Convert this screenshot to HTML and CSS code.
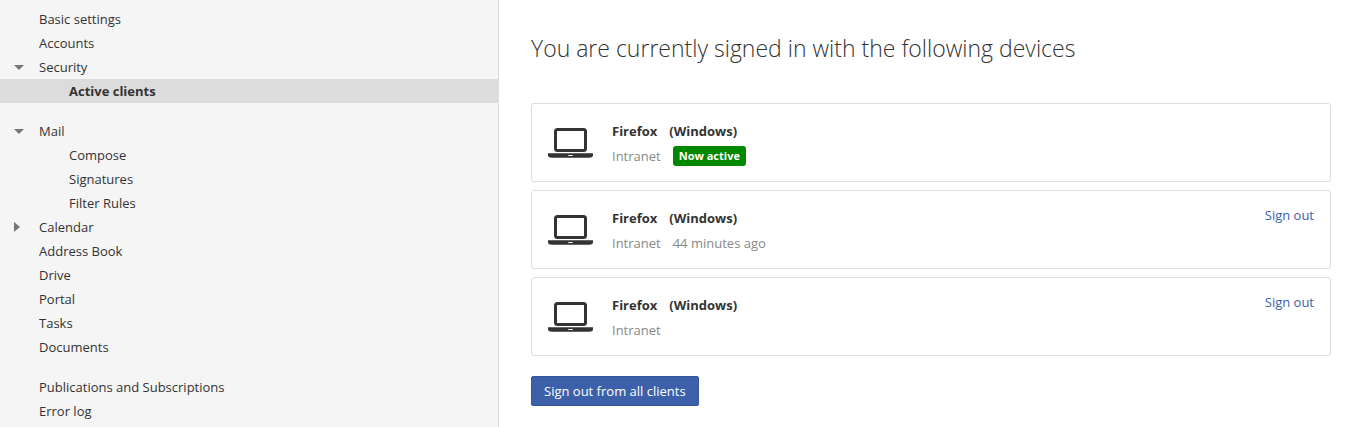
FILE: index.html
```html
<!DOCTYPE html>
<html lang="en">
<head>
  <meta charset="UTF-8">
  <meta name="viewport" content="width=device-width, initial-scale=1">
  <title>Active clients</title>
  <link rel="stylesheet" href="styles.css">
</head>
<body>

  <nav class="sidebar">
    <ul class="tree">
      <li><a href="#">Basic settings</a></li>
      <li><a href="#">Accounts</a></li>
      <li>
        <button type="button" class="caret open" aria-label="Toggle Security"></button>
        <a href="#">Security</a>
      </li>
      <li class="child selected"><a href="#">Active clients</a></li>
    </ul>
    <ul class="tree">
      <li>
        <button type="button" class="caret open" aria-label="Toggle Mail"></button>
        <a href="#">Mail</a>
      </li>
      <li class="child"><a href="#">Compose</a></li>
      <li class="child"><a href="#">Signatures</a></li>
      <li class="child"><a href="#">Filter Rules</a></li>
      <li>
        <button type="button" class="caret" aria-label="Toggle Calendar"></button>
        <a href="#">Calendar</a>
      </li>
      <li><a href="#">Address Book</a></li>
      <li><a href="#">Drive</a></li>
      <li><a href="#">Portal</a></li>
      <li><a href="#">Tasks</a></li>
      <li><a href="#">Documents</a></li>
    </ul>
    <ul class="tree">
      <li><a href="#">Publications and Subscriptions</a></li>
      <li><a href="#">Error log</a></li>
    </ul>
  </nav>

  <main class="content">
    <h1>You are currently signed in with the following devices</h1>

    <ul class="clients">
      <li class="client">
        <svg class="laptop" viewBox="0 0 45 30" aria-hidden="true">
          <rect x="7.5" y="1.5" width="30" height="21" rx="2" fill="none" stroke="currentColor" stroke-width="3"/>
          <path fill="currentColor" fill-rule="evenodd" d="M0 25.2h45v2c0 1.800-2 2.500-4 2.500H4c-2 0-4-.7-4-2.500zM20.300 27v1h4.400v-1z"/>
        </svg>
        <div class="details">
          <div class="name"><span>Firefox</span><span>(Windows)</span></div>
          <div class="info"><span>Intranet</span><span class="label">Now active</span></div>
        </div>
      </li>
      <li class="client">
        <svg class="laptop" viewBox="0 0 45 30" aria-hidden="true">
          <rect x="7.5" y="1.5" width="30" height="21" rx="2" fill="none" stroke="currentColor" stroke-width="3"/>
          <path fill="currentColor" fill-rule="evenodd" d="M0 25.2h45v2c0 1.800-2 2.500-4 2.500H4c-2 0-4-.7-4-2.500zM20.300 27v1h4.400v-1z"/>
        </svg>
        <div class="details">
          <div class="name"><span>Firefox</span><span>(Windows)</span></div>
          <div class="info"><span>Intranet</span><span>44 minutes ago</span></div>
        </div>
        <a href="#" class="sign-out">Sign out</a>
      </li>
      <li class="client">
        <svg class="laptop" viewBox="0 0 45 30" aria-hidden="true">
          <rect x="7.5" y="1.5" width="30" height="21" rx="2" fill="none" stroke="currentColor" stroke-width="3"/>
          <path fill="currentColor" fill-rule="evenodd" d="M0 25.2h45v2c0 1.800-2 2.500-4 2.500H4c-2 0-4-.7-4-2.500zM20.300 27v1h4.400v-1z"/>
        </svg>
        <div class="details">
          <div class="name"><span>Firefox</span><span>(Windows)</span></div>
          <div class="info"><span>Intranet</span></div>
        </div>
        <a href="#" class="sign-out">Sign out</a>
      </li>
    </ul>

    <button type="button" class="btn-primary">Sign out from all clients</button>
  </main>

</body>
</html>
```
FILE: styles.css
```css
* {
  box-sizing: border-box;
}

body {
  display: flex;
  min-height: 100vh;
  margin: 0;
  font-family: "Open Sans", "Noto Sans", sans-serif;
  font-size: 13px;
  line-height: 20px;
  color: #333;
  background: #fff;
}

ul {
  list-style: none;
  margin: 0;
  padding: 0;
}

a {
  text-decoration: none;
}

/* folder tree */
.sidebar {
  flex: 0 0 499px;
  padding: 7px 0 4px;
  background: #f5f5f5;
  border-right: 1px solid #ddd;
}

.tree + .tree {
  margin-top: 16px;
}

.tree li {
  display: flex;
  align-items: center;
  height: 24px;
  padding-left: 39px;
}

.tree a {
  flex: 1;
  line-height: 24px;
  color: #333;
}

.tree .child {
  padding-left: 69px;
}

.tree .selected {
  background: #dcdcdc;
  font-weight: bold;
}

.caret {
  display: flex;
  align-items: center;
  width: 25px;
  height: 24px;
  margin-left: -25px;
  padding: 0;
  border: 0;
  background: none;
  cursor: pointer;
}

.caret::before {
  content: "";
  border-left: 6px solid #777;
  border-top: 5px solid transparent;
  border-bottom: 5px solid transparent;
}

.caret.open::before {
  border-top: 5px solid #777;
  border-bottom: 0;
  border-left: 5px solid transparent;
  border-right: 5px solid transparent;
}

/* active clients */
.content {
  flex: 1;
  padding: 32px 40px 20px 32px;
}

h1 {
  margin: 0 0 39px;
  font-size: 23px;
  font-weight: 300;
  line-height: 32px;
}

.client {
  display: flex;
  align-items: flex-start;
  margin-bottom: 8px;
  padding: 14px 16px 13px;
  border: 1px solid #ddd;
  border-radius: 3px;
}

.client:last-child {
  margin-bottom: 20px;
}

.laptop {
  width: 45px;
  height: 30px;
  margin: 10px 19px 0 0;
}

.details {
  flex: 1;
}

.name,
.info {
  display: flex;
  align-items: center;
  gap: 12px;
  height: 25px;
}

.name {
  font-weight: bold;
}

.info {
  color: #888;
}

.label {
  padding: 0 6px;
  border-radius: 3px;
  background: #008800;
  color: #fff;
  font-size: 11px;
  font-weight: bold;
}

.sign-out {
  color: #3d60aa;
}

.btn-primary {
  height: 30px;
  padding: 0 12px;
  border: 1px solid #36549a;
  border-radius: 2px;
  background: #3d60aa;
  color: #fff;
  font: inherit;
  cursor: pointer;
}
```
